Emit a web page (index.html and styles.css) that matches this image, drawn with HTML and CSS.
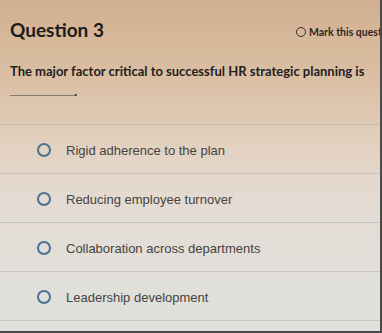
FILE: index.html
```html
<!doctype html>
<html lang="en">
<head>
    <meta charset="UTF-8">
    <title>Question 3</title>
    <link rel="stylesheet" href="styles.css">
</head>
<body>
    <div class="quiz">
        <div class="quiz-head">
            <h2 class="quiz-title">Question 3</h2>
            <label class="quiz-mark"><span class="ring"></span>Mark this question</label>
        </div>
        <p class="quiz-text">The major factor critical to successful HR strategic planning is<br><span class="blank"></span>.</p>
        <ul class="quiz-options">
            <li><span class="radio"></span>Rigid adherence to the plan</li>
            <li><span class="radio"></span>Reducing employee turnover</li>
            <li><span class="radio"></span>Collaboration across departments</li>
            <li><span class="radio"></span>Leadership development</li>
        </ul>
    </div>
</body>
</html>
```

FILE: styles.css
```css
html, body {
    margin: 0;
    height: 100%;
}
body {
    font-family: "Liberation Sans", Arial, sans-serif;
    background: linear-gradient(180deg, #d2b08f 0%, #dbc0a5 25%, #e3d2c2 45%, #e4dcd4 62%, #dfe1de 100%);
    overflow: hidden;
    border-right: 2px solid #4a4a48;
    border-bottom: 2px solid #4a4a48;
    box-sizing: border-box;
}
.quiz {
    width: 380px;
}
.quiz-head {
    display: flex;
    justify-content: space-between;
    align-items: center;
    padding: 18px 0 0 10px;
    white-space: nowrap;
    overflow: hidden;
}
.quiz-title {
    margin: 0;
    font-family: Lato, "Liberation Sans", sans-serif;
    font-size: 19px;
    font-weight: bold;
    color: #1e1c1a;
}
.quiz-mark {
    display: flex;
    align-items: center;
    gap: 3px;
    font-family: Lato, "Liberation Sans", sans-serif;
    font-size: 10.5px;
    font-weight: bold;
    color: #2a2826;
    width: 84px;
    overflow: hidden;
    margin-top: 5px;
}
.ring {
    flex: none;
    width: 8px;
    height: 8px;
    border: 1.5px solid #333;
    border-radius: 50%;
}
.quiz-text {
    margin: 20px 0 0 10px;
    font-family: Lato, "Liberation Sans", sans-serif;
    font-size: 13px;
    font-weight: bold;
    line-height: 20px;
    color: #23211f;
    white-space: nowrap;
}
.blank {
    display: inline-block;
    width: 64px;
    border-bottom: 1px solid #857a70;
}
.quiz-options {
    list-style: none;
    margin: 23px 0 0 0;
    padding: 0;
    border-top: 1px solid #c6bcb2;
}
.quiz-options li {
    display: flex;
    align-items: center;
    height: 48px;
    padding-left: 37px;
    padding-top: 2px;
    box-sizing: border-box;
    height: 49px;
    border-bottom: 1px solid #c8c6c2;
    font-size: 13px;
    color: #45433f;
}
.radio {
    flex: none;
    width: 10px;
    height: 10px;
    border: 2px solid #4c6f94;
    border-radius: 50%;
    margin-right: 15px;
}
```
